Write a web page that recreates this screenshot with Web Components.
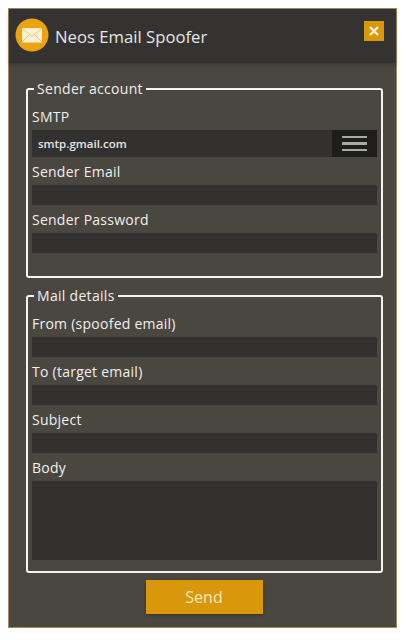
<!DOCTYPE html>
<html>
<head>
<meta charset="utf-8">
<title>Neos Email Spoofer</title>
<style>
  html, body { margin: 0; background: #fff; }
  body { padding: 8px 10px 12px 8px; font-family: "Open Sans", "Noto Sans", sans-serif; }
</style>
</head>
<body>
<spoofer-window>
  <span slot="title">Neos Email Spoofer</span>
  <group-box label="Sender account" style="height:198px">
    <form-field label="SMTP" kind="select" value="smtp.gmail.com"></form-field>
    <form-field label="Sender Email" kind="text"></form-field>
    <form-field label="Sender Password" kind="text"></form-field>
  </group-box>
  <group-box label="Mail details" style="height:286px;margin-top:9px">
    <form-field label="From (spoofed email)" kind="text"></form-field>
    <form-field label="To (target email)" kind="text"></form-field>
    <form-field label="Subject" kind="text"></form-field>
    <form-field label="Body" kind="area"></form-field>
  </group-box>
  <send-button>Send</send-button>
</spoofer-window>

<script>
class SpooferWindow extends HTMLElement {
  constructor () {
    super();
    this.attachShadow({ mode: "open" });
  }

  connectedCallback () {
    this.shadowRoot.innerHTML = /* html */`
    <style>
      :host {
        display: block;
        width: 389px;
        height: 620px;
        box-sizing: border-box;
        border: 1px solid #a08a5e;
        background: #4a4640;
        color: #f0f0ee;
      }
      header {
        display: flex;
        align-items: center;
        height: 54px;
        padding: 0 12px 0 6px;
        background: #343332;
        box-shadow: 0 2px 3px rgba(40, 38, 34, .35);
      }
      .title {
        flex: 1;
        margin-left: 6px;
        font-size: 16.7px;
        color: #e6e6e4;
      }
      .logo { display: block; margin-top: -2px; }
      .close {
        display: grid;
        place-items: center;
        width: 20px;
        height: 20px;
        margin-top: -11px;
        background: #d9980b;
      }
      main { padding: 17px 13px 0 17px; }
    </style>
    <header>
      <svg class="logo" width="34" height="34" viewBox="0 0 34 34">
        <circle cx="17" cy="17" r="16.5" fill="#eba40f"/>
        <rect x="7" y="10" width="20" height="14.5" rx="1" fill="#fdf1d3"/>
        <path d="M7.5 10.5 17 18.5 26.5 10.5M7.5 24 14 16.5M26.5 24 20 16.5" fill="none" stroke="#eec777" stroke-width="1"/>
      </svg>
      <div class="title"><slot name="title"></slot></div>
      <div class="close">
        <svg width="12" height="12" viewBox="0 0 12 12">
          <path d="M2 2 10 10M10 2 2 10" stroke="#fdf3dc" stroke-width="2.4"/>
        </svg>
      </div>
    </header>
    <main><slot></slot></main>
    `;
  }
}

class GroupBox extends HTMLElement {
  constructor () {
    super();
    this.attachShadow({ mode: "open" });
  }

  connectedCallback () {
    const label = this.getAttribute("label");

    this.shadowRoot.innerHTML = /* html */`
    <style>
      :host { display: block; box-sizing: border-box; }
      fieldset {
        box-sizing: border-box;
        height: 100%;
        margin: 0;
        padding: 4px 4px 0 4px;
        border: 2px solid #f4f4f2;
        border-radius: 3px;
      }
      legend {
        padding: 0 3px;
        margin-left: 2px;
        font-size: 14px;
        line-height: 18px;
        letter-spacing: .3px;
      }
    </style>
    <fieldset>
      <legend>${label}</legend>
      <slot></slot>
    </fieldset>
    `;
  }
}

class FormField extends HTMLElement {
  constructor () {
    super();
    this.attachShadow({ mode: "open" });
  }

  connectedCallback () {
    const label = this.getAttribute("label");
    const kind = this.getAttribute("kind") || "text";
    const value = this.getAttribute("value") || "";
    const menu = kind === "select" ? /* html */`
      <span class="menu"><i></i><i></i><i></i></span>` : "";

    this.shadowRoot.innerHTML = /* html */`
    <style>
      :host { display: block; }
      label {
        display: block;
        box-sizing: border-box;
        height: 28px;
        padding-top: 2px;
        font-size: 14px;
        line-height: 26px;
        letter-spacing: .25px;
      }
      .box {
        display: flex;
        align-items: center;
        height: 20px;
        background: #323130;
      }
      .select { height: 27px; }
      .area { height: 79px; }
      .value {
        flex: 1;
        padding-left: 6px;
        font-size: 11.5px;
        font-weight: 600;
        color: #e4e4e2;
      }
      .menu {
        display: flex;
        flex-direction: column;
        justify-content: center;
        gap: 4px;
        width: 45px;
        height: 100%;
        padding: 0 10px;
        box-sizing: border-box;
        background: #1e1e1d;
      }
      .menu i { display: block; height: 2.5px; background: #a8a8a6; }
    </style>
    <label>${label}</label>
    <div class="box ${kind}"><span class="value">${value}</span>${menu}</div>
    `;
  }
}

class SendButton extends HTMLElement {
  constructor () {
    super();
    this.attachShadow({ mode: "open" });
  }

  connectedCallback () {
    this.shadowRoot.innerHTML = /* html */`
    <style>
      :host { display: flex; justify-content: center; margin-top: 7px; padding-right: 1px; }
      button {
        width: 117px;
        height: 34px;
        padding: 0;
        border: 0;
        background: #d9980b;
        box-shadow: 0 1px 2px rgba(30, 28, 24, .5);
        font-family: inherit;
        font-size: 16px;
        color: #fbe7bd;
      }
    </style>
    <button type="button"><slot></slot></button>
    `;
  }
}

customElements.define("spoofer-window", SpooferWindow);
customElements.define("group-box", GroupBox);
customElements.define("form-field", FormField);
customElements.define("send-button", SendButton);
</script>
</body>
</html>
